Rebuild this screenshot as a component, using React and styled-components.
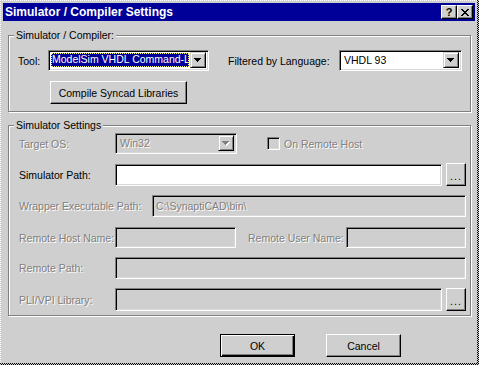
import React from 'react';
import styled, { createGlobalStyle, css } from 'styled-components';

const GRAY = '#cfcfcf';
const DARK = '#808080';
const BLUE = '#000099';

const GlobalStyle = createGlobalStyle`
  html, body {
    margin: 0;
    padding: 0;
    background: ${GRAY};
  }
  body {
    font-family: "Liberation Sans", Arial, sans-serif;
    font-size: 10.5px;
    color: #000;
  }
`;

const Frame = styled.div`
  width: 479px;
  height: 365px;
  box-sizing: border-box;
  padding: 0 2px 2px 0;
  background: repeating-conic-gradient(#000 0 25%, ${GRAY} 0 50%) 0 0 / 2px 2px;
`;

const Window = styled.div`
  width: 477px;
  height: 363px;
  box-sizing: border-box;
  border-top: 1px dotted #fff;
  border-left: 1px dotted #fff;
  background: ${GRAY};
  padding: 2px 2px 0 2px;
  display: flex;
  flex-direction: column;
`;

const TitleBar = styled.div`
  height: 18px;
  background: ${BLUE};
  color: #fff;
  display: flex;
  align-items: center;
  padding-left: 2px;
  font-weight: bold;
  font-size: 12px;
  line-height: 18px;
`;

const TitleButtons = styled.div`
  margin-left: auto;
  margin-right: 2px;
  display: flex;
`;

const raised = css`
  box-sizing: border-box;
  background: ${GRAY};
  border-top: 1px solid #fff;
  border-left: 1px solid #fff;
  border-right: 1px solid #000;
  border-bottom: 1px solid #000;
  box-shadow: inset -1px -1px 0 ${DARK};
`;

const sunken = css`
  box-sizing: border-box;
  border-top: 1px solid ${DARK};
  border-left: 1px solid ${DARK};
  border-right: 1px solid #fff;
  border-bottom: 1px solid #fff;
  box-shadow: inset 1px 1px 0 #000, inset -1px -1px 0 #d8d8d8;
`;

const CaptionButton = styled.div`
  ${raised};
  width: 16px;
  height: 14px;
  display: flex;
  align-items: center;
  justify-content: center;
  color: #000;
  font-size: 11px;
  font-weight: bold;
  line-height: 12px;
`;

const Body = styled.div`
  padding: 14px 4px 0 5px;
  display: flex;
  flex-direction: column;
`;

const Group = styled.div`
  position: relative;
  box-sizing: border-box;
  height: ${(p) => p.$h}px;
  margin-top: ${(p) => p.$mt || 0}px;
  border: 1px solid ${DARK};
  box-shadow: inset 1px 1px 0 #fff, 1px 1px 0 #fff;
  padding: ${(p) => p.$pad};
`;

const Legend = styled.span`
  position: absolute;
  top: -7px;
  left: 5px;
  padding: 0 2px;
  background: ${GRAY};
  line-height: 13px;
  white-space: nowrap;
`;

const Row = styled.div`
  display: flex;
  align-items: center;
  height: ${(p) => p.$h || 22}px;
  margin-top: ${(p) => p.$mt || 0}px;
`;

const Label = styled.span`
  width: ${(p) => p.$w}px;
  margin-left: ${(p) => p.$ml || 0}px;
  flex: none;
  white-space: nowrap;
  ${(p) =>
    p.$off &&
    css`
      color: ${DARK};
      text-shadow: 1px 1px 0 #fff;
    `}
`;

const Combo = styled.div`
  ${sunken};
  width: ${(p) => p.$w}px;
  height: 21px;
  flex: none;
  display: flex;
  align-items: stretch;
  padding: 1px 2px 2px 2px;
  background: ${(p) => (p.$off ? GRAY : '#fff')};
`;

const ComboText = styled.div`
  flex: 1;
  min-width: 0;
  overflow: hidden;
  white-space: nowrap;
  padding: 1px 1px 1px 0;
  display: flex;
  ${(p) =>
    p.$off &&
    css`
      color: ${DARK};
      text-shadow: 1px 1px 0 #fff;
    `}
`;

const Plain = styled.span`
  padding-left: 2px;
  line-height: 15px;
`;

const Selected = styled.span`
  flex: 1;
  min-width: 0;
  overflow: hidden;
  background: ${BLUE};
  color: #fff;
  line-height: 13px;
  padding-left: 1px;
  outline: 1px dotted #ffff66;
  outline-offset: -1px;
`;

const DropButton = styled.div`
  ${raised};
  width: 16px;
  flex: none;
  display: flex;
  align-items: center;
  justify-content: center;
  border-top-color: ${GRAY};
  border-left-color: ${GRAY};
  box-shadow: inset 1px 1px 0 #fff, inset -1px -1px 0 ${DARK};
`;

const TextBox = styled.div`
  ${sunken};
  width: ${(p) => p.$w}px;
  height: ${(p) => p.$h || 22}px;
  flex: none;
  background: ${(p) => (p.$off ? GRAY : '#fff')};
  padding: 0 3px;
  line-height: 20px;
  white-space: nowrap;
  overflow: hidden;
  color: ${DARK};
  text-shadow: 1px 1px 0 #fff;
`;

const PushButton = styled.div`
  ${raised};
  width: ${(p) => p.$w}px;
  height: ${(p) => p.$h || 23}px;
  margin-left: ${(p) => p.$ml || 0}px;
  flex: none;
  display: flex;
  align-items: center;
  justify-content: center;
  white-space: nowrap;
  ${(p) =>
    p.$default &&
    css`
      border: 1px solid #000;
      box-shadow: inset 1px 1px 0 #fff, inset -1px -1px 0 #000, inset -2px -2px 0 ${DARK};
    `}
`;

const Ellipsis = styled(PushButton)`
  align-items: flex-end;
  padding-bottom: 5px;
  letter-spacing: 1px;
  line-height: 8px;
`;

const CheckBox = styled.div`
  ${sunken};
  width: 13px;
  height: 13px;
  margin-left: ${(p) => p.$ml || 0}px;
  background: ${GRAY};
  flex: none;
`;

const Footer = styled.div`
  display: flex;
  margin-top: 18px;
  padding-left: 212px;
  gap: 31px;
`;

const Arrow = ({ off }) => (
  <svg width="8" height="5" viewBox="0 0 8 5" shapeRendering="crispEdges">
    {off && <path d="M1 1h7v1H1zM2 2h5v1H2zM3 3h3v1H3zM4 4h1v1H4z" fill="#fff" />}
    <path d="M0 0h7v1H0zM1 1h5v1H1zM2 2h3v1H2zM3 3h1v1H3z" fill={off ? DARK : '#000'} />
  </svg>
);

const CloseGlyph = () => (
  <svg width="8" height="7" viewBox="0 0 8 7" shapeRendering="crispEdges">
    <path
      d="M0 0h2v1H0zM6 0h2v1H6zM1 1h2v1H1zM5 1h2v1H5zM2 2h4v1H2zM3 3h2v1H3zM2 4h4v1H2zM1 5h2v1H1zM5 5h2v1H5zM0 6h2v1H0zM6 6h2v1H6z"
      fill="#000"
    />
  </svg>
);

export default function App() {
  return (
    <>
      <GlobalStyle />
      <Frame>
        <Window>
          <TitleBar>
            Simulator / Compiler Settings
            <TitleButtons>
              <CaptionButton>?</CaptionButton>
              <CaptionButton>
                <CloseGlyph />
              </CaptionButton>
            </TitleButtons>
          </TitleBar>

          <Body>
            <Group $h={77} $pad="14px 0 0 9px">
              <Legend>Simulator / Compiler:</Legend>
              <Row $h={21}>
                <Label $w={30}>Tool:</Label>
                <Combo $w={161}>
                  <ComboText>
                    <Selected>ModelSim VHDL Command-Line</Selected>
                  </ComboText>
                  <DropButton>
                    <Arrow />
                  </DropButton>
                </Combo>
                <Label $w={111} $ml={19}>Filtered by Language:</Label>
                <Combo $w={123}>
                  <ComboText>
                    <Plain>VHDL 93</Plain>
                  </ComboText>
                  <DropButton>
                    <Arrow />
                  </DropButton>
                </Combo>
              </Row>
              <Row $h={23} $mt={10}>
                <PushButton $w={137} $ml={32}>Compile Syncad Libraries</PushButton>
              </Row>
            </Group>

            <Group $h={191} $mt={13} $pad="7px 0 0 10px">
              <Legend>Simulator Settings</Legend>
              <Row $h={21}>
                <Label $w={96} $off>Target OS:</Label>
                <Combo $w={122} $off>
                  <ComboText $off>
                    <Plain>Win32</Plain>
                  </ComboText>
                  <DropButton>
                    <Arrow off />
                  </DropButton>
                </Combo>
                <CheckBox $ml={30} />
                <Label $w={120} $ml={4} $off>On Remote Host</Label>
              </Row>
              <Row $mt={9} $h={23}>
                <Label $w={96}>Simulator Path:</Label>
                <TextBox $w={327} />
                <Ellipsis $w={20} $ml={4}>...</Ellipsis>
              </Row>
              <Row $mt={9}>
                <Label $w={133} $off>Wrapper Executable Path:</Label>
                <TextBox $w={314} $off>C:\SynaptiCAD\bin\</TextBox>
              </Row>
              <Row $mt={10} $h={21}>
                <Label $w={96} $off>Remote Host Name:</Label>
                <TextBox $w={121} $h={21} $off />
                <Label $w={98} $ml={12} $off>Remote User Name:</Label>
                <TextBox $w={120} $h={21} $off />
              </Row>
              <Row $mt={9}>
                <Label $w={96} $off>Remote Path:</Label>
                <TextBox $w={351} $off />
              </Row>
              <Row $mt={9} $h={23}>
                <Label $w={96} $off>PLI/VPI Library:</Label>
                <TextBox $w={327} $h={23} $off />
                <Ellipsis $w={20} $ml={4}>...</Ellipsis>
              </Row>
            </Group>

            <Footer>
              <PushButton $w={75} $default>OK</PushButton>
              <PushButton $w={75}>Cancel</PushButton>
            </Footer>
          </Body>
        </Window>
      </Frame>
    </>
  );
}
